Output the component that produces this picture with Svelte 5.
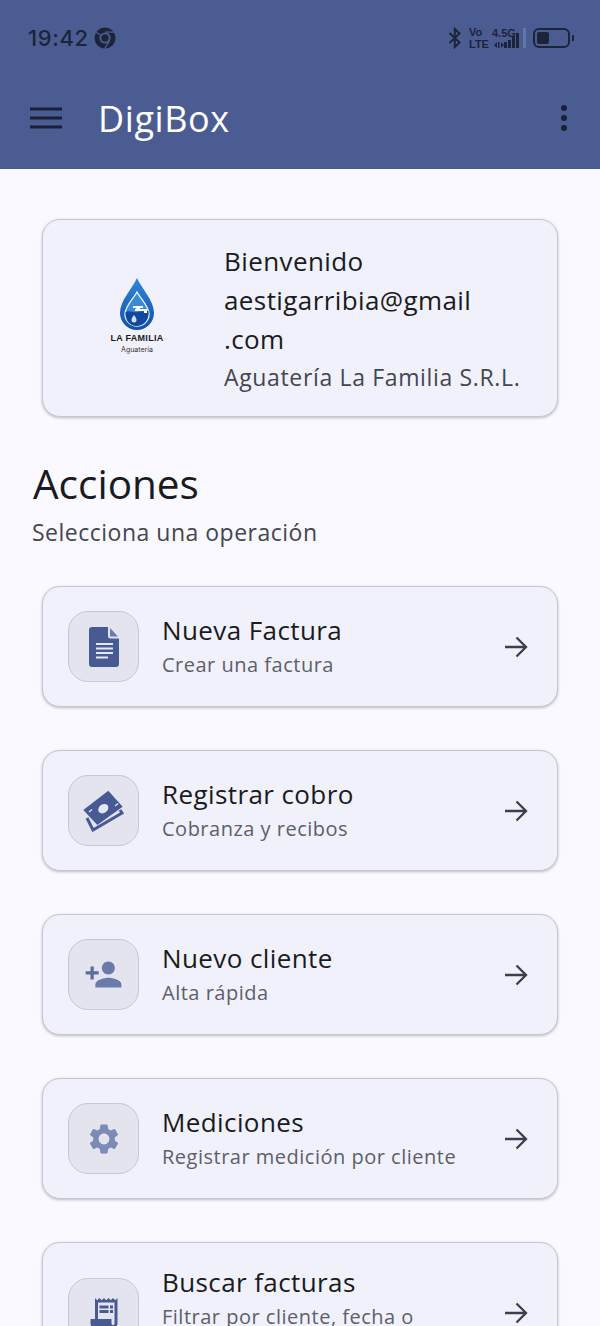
<script>
  const actions = [
    { title: 'Nueva Factura', sub: 'Crear una factura', icon: 'doc' },
    { title: 'Registrar cobro', sub: 'Cobranza y recibos', icon: 'money' },
    { title: 'Nuevo cliente', sub: 'Alta rápida', icon: 'person' },
    { title: 'Mediciones', sub: 'Registrar medición por cliente', icon: 'gear' },
    { title: 'Buscar facturas', sub: 'Filtrar por cliente, fecha o estado', icon: 'receipt' }
  ]
</script>

<div class="screen">
  <header class="top">
    <div class="status">
      <span class="time">19:42</span>
      <svg class="chrome" width="22" height="22" viewBox="0 0 22 22">
        <circle cx="11" cy="11" r="10.5" fill="#1c2439" />
        <circle cx="11" cy="11" r="5.6" fill="#4b5c92" />
        <circle cx="11" cy="11" r="3.7" fill="#1c2439" />
        <path d="M11 5.2h9M6 8l-4.600-3.400M15.600 13.500l-4.800 8" stroke="#4b5c92" stroke-width="1.300" fill="none" />
      </svg>
      <span class="spacer"></span>
      <svg class="bt" width="14" height="22" viewBox="0 0 14 22">
        <path d="M1.500 6l10 9.500L6.800 20V2l4.700 4.500L1.500 16" fill="none" stroke="#1c2439" stroke-width="2" />
      </svg>
      <span class="volte"><span>Vo</span><span>LTE</span></span>
      <span class="net">
        <span class="g">4.5G</span>
        <svg width="10" height="6" viewBox="0 0 10 6" fill="#1c2439">
          <path d="M0 3l3-3v6zM10 3L7 0v6z" />
          <rect x="4" y="0" width="1.500" height="6" />
        </svg>
      </span>
      <span class="bars">
        {#each [6, 8, 12, 15] as h}
          <i style="height: {h}px"></i>
        {/each}
        <i class="off" style="height: 20px"></i>
      </span>
      <span class="battery"><span class="level"></span></span>
      <span class="nub"></span>
    </div>
    <div class="bar">
      <svg width="32" height="22" viewBox="0 0 32 22">
        <path d="M0 2h32M0 11h32M0 20h32" stroke="#1a2135" stroke-width="3" />
      </svg>
      <span class="brand">DigiBox</span>
      <span class="spacer"></span>
      <svg class="dots" width="8" height="28" viewBox="0 0 8 28">
        <circle cx="4" cy="4" r="3" fill="#1a2135" />
        <circle cx="4" cy="14" r="3" fill="#1a2135" />
        <circle cx="4" cy="24" r="3" fill="#1a2135" />
      </svg>
    </div>
  </header>

  <main>
    <section class="card welcome">
      <div class="logo">
        <svg width="36" height="54" viewBox="0 0 36 54">
          <defs>
            <linearGradient id="drop" x1="0" y1="0" x2="0" y2="1">
              <stop offset="0" stop-color="#2f86d8" />
              <stop offset="1" stop-color="#1250ac" />
            </linearGradient>
          </defs>
          <path d="M18 1C14 11 1 23 1 36a17 17 0 0 0 34 0C35 23 22 11 18 1z" fill="url(#drop)" />
          <path d="M18 15C15 21 6 29 6 37a12 12 0 0 0 24 0C30 29 21 21 18 15z" fill="#3a8ad6" stroke="#e8f2fb" stroke-width="1.400" />
          <path d="M6.500 35c5-2 8 1 12 0s7-1 11-1c1 9-5 15-12 15S6 43 6.500 35z" fill="#14489f" />
          <path d="M14 29h10v2h-3v1h7v4h-3v-2h-9v-2h1v-1h-3z" fill="#fff" />
          <path d="M15 38c1.500 2 2.500 3.500 2.500 5a2.500 2.500 0 0 1-5 0c0-1.500 1-3 2.500-5z" fill="#cfe4f7" />
        </svg>
        <span class="lf">LA FAMILIA</span>
        <span class="ag">Aguatería</span>
      </div>
      <div class="who">
        <p class="line">Bienvenido</p>
        <p class="line email">aestigarribia@gmail<br />.com</p>
        <p class="org">Aguatería La Familia S.R.L.</p>
      </div>
    </section>

    <h1>Acciones</h1>
    <p class="lead">Selecciona una operación</p>

    <div class="list">
      {#each actions as a}
        <article class="card action">
          <div class="tile">
            {#if a.icon === 'doc'}
              <svg width="30" height="40" viewBox="0 0 30 40">
                <path d="M3 0h16v9a2.500 2.500 0 0 0 2.500 2.500H30V37a3 3 0 0 1-3 3H3a3 3 0 0 1-3-3V3a3 3 0 0 1 3-3z" fill="#475a94" />
                <path d="M21 1l8 8.500h-8z" fill="#6a7bab" />
                <path d="M7 17h17M7 21.500h17M7 26h17M7 30.500h12" stroke="#e4e6f0" stroke-width="1.800" />
              </svg>
            {:else if a.icon === 'money'}
              <svg width="42" height="42" viewBox="0 0 42 42">
                <path d="M4 28l6 12 29-17-2-3" fill="none" stroke="#475a94" stroke-width="3" />
                <path d="M.3 20L25.300.7l14.400 16L14.300 35z" fill="#475a94" />
                <ellipse cx="20.300" cy="18.700" rx="5.500" ry="4.300" transform="rotate(-38 20.300 18.700)" fill="#e4e6f0" />
                <path d="M6 20l3-2.500M32 14l3-2.500" stroke="#e4e6f0" stroke-width="1.300" transform="translate(0 2)" />
              </svg>
            {:else if a.icon === 'person'}
              <svg width="39" height="39" viewBox="0 0 24 24" fill="#6a7bab">
                <path d="M15 12c2.210 0 4-1.790 4-4s-1.790-4-4-4-4 1.790-4 4 1.790 4 4 4zm0 2c-2.670 0-8 1.340-8 4v2h16v-2c0-2.660-5.330-4-8-4z" />
                <path d="M6 10V7H4v3H1v2h3v3h2v-3h3v-2H6z" fill="#5b6c9f" />
              </svg>
            {:else if a.icon === 'gear'}
              <svg width="36" height="36" viewBox="0 0 24 24">
                <path fill="#7c8bb5" d="M19.140 12.940c.04-.3.060-.61.060-.94 0-.32-.02-.64-.07-.94l2.030-1.580a.49.490 0 0 0 .12-.61l-1.920-3.320a.488.488 0 0 0-.59-.22l-2.390.96c-.5-.38-1.030-.7-1.620-.94l-.36-2.540a.484.484 0 0 0-.48-.41h-3.840c-.24 0-.43.170-.47.410l-.36 2.540c-.59.240-1.130.570-1.620.940l-2.390-.96c-.22-.080-.47 0-.59.220L2.740 8.870c-.12.210-.08.470.12.610l2.030 1.580c-.05.300-.09.630-.09.940s.02.640.07.940l-2.030 1.580a.49.490 0 0 0-.12.610l1.920 3.320c.12.220.37.290.59.220l2.390-.96c.5.380 1.030.7 1.620.94l.36 2.540c.05.240.24.410.48.410h3.840c.24 0 .44-.17.47-.41l.36-2.540c.59-.24 1.130-.56 1.620-.94l2.390.96c.22.080.47 0 .59-.22l1.920-3.320c.12-.22.070-.47-.12-.61l-2.010-1.580zM12 15.600c-1.980 0-3.600-1.620-3.600-3.600s1.620-3.600 3.600-3.600 3.600 1.620 3.600 3.600-1.620 3.600-3.600 3.600z" />
              </svg>
            {:else}
              <svg width="36" height="36" viewBox="0 0 24 24" fill="#475a94">
                <path d="M19.500 3.500 18 2l-1.500 1.500L15 2l-1.500 1.500L12 2l-1.500 1.500L9 2 7.500 3.500 6 2v14H3v3c0 1.660 1.340 3 3 3h12c1.660 0 3-1.340 3-3V2l-1.500 1.500zM19 19c0 .55-.45 1-1 1s-1-.45-1-1v-3H8V5h11v14z" />
                <path d="M9 7h6v2H9zm7 0h2v2h-2zM9 10h6v2H9zm7 0h2v2h-2z" />
              </svg>
            {/if}
          </div>
          <div class="text">
            <h2>{a.title}</h2>
            <p>{a.sub}</p>
          </div>
          <svg class="go" width="24" height="22" viewBox="0 0 24 22" fill="none" stroke="#3d3f4c" stroke-width="2.300">
            <path d="M1 11h21M12.500 1.500L22 11l-9.500 9.500" />
          </svg>
        </article>
      {/each}
    </div>
  </main>
</div>

<style>
  :global(body) {
    margin: 0;
    background: #f9f9ff;
  }

  .screen {
    width: 600px;
    height: 1326px;
    overflow: hidden;
    font-family: "Open Sans", "Noto Sans", sans-serif;
    color: #1a1b21;
    background: #f9f9ff;
  }

  .top {
    background: #4b5c92;
    height: 169px;
    box-sizing: border-box;
    padding: 20px 26px 0 28px;
  }

  .status {
    display: flex;
    align-items: center;
    height: 36px;
    color: #1c2439;
  }

  .time {
    font-family: Inter, sans-serif;
    font-size: 22px;
    font-weight: 500;
    letter-spacing: 0.6px;
  }

  .chrome {
    margin-left: 5px;
  }

  .spacer {
    flex: 1;
  }

  .bt {
    margin-right: 7px;
  }

  .volte {
    display: flex;
    flex-direction: column;
    font-family: "Liberation Sans", sans-serif;
    font-size: 11px;
    font-weight: 700;
    line-height: 12px;
    width: 23px;
  }

  .net {
    display: flex;
    flex-direction: column;
    align-items: flex-start;
    font-family: "Liberation Sans", sans-serif;
    font-weight: 700;
    width: 20px;
    padding-bottom: 1px;
  }

  .net svg {
    margin: 3px 0 0 2px;
  }

  .g {
    font-size: 11px;
    line-height: 12px;
    white-space: nowrap;
  }

  .bars {
    display: flex;
    align-items: flex-end;
    gap: 1px;
    height: 20px;
    margin: 0 7px 0 -8px;
  }

  .bars i {
    display: block;
    width: 3px;
    background: #1c2439;
  }

  .bars i.off {
    margin-left: 3px;
    background: #6475a8;
  }

  .battery {
    display: block;
    box-sizing: border-box;
    width: 37px;
    height: 20px;
    border: 2px solid #1c2439;
    border-radius: 6px;
    padding: 2px;
  }

  .level {
    display: block;
    width: 12px;
    height: 12px;
    background: #1c2439;
    border-radius: 2px;
  }

  .nub {
    display: block;
    width: 2px;
    height: 6px;
    margin-left: 2px;
    background: #1c2439;
  }

  .bar {
    display: flex;
    align-items: center;
    height: 44px;
    margin-top: 40px;
    padding: 0 6px 0 2px;
  }

  .brand {
    margin-left: 36px;
    font-size: 36px;
    letter-spacing: 0.6px;
    color: #fff;
  }

  main {
    padding: 50px 42px 0 42px;
  }

  .card {
    box-sizing: border-box;
    display: flex;
    align-items: center;
    background: #f0f1fa;
    border: 1.500px solid #c6c7d0;
    border-radius: 18px;
    box-shadow: 0 1px 3px rgba(0, 0, 0, 0.25);
  }

  .welcome {
    height: 198px;
    padding-left: 51px;
  }

  .logo {
    display: flex;
    flex-direction: column;
    align-items: center;
    width: 86px;
    margin-right: 44px;
  }

  .logo svg {
    margin-top: -3px;
  }

  .lf {
    margin-top: 1px;
    font-family: "Liberation Sans", sans-serif;
    font-size: 9px;
    font-weight: 700;
    letter-spacing: 0.3px;
    line-height: 12px;
    color: #1b1b1b;
  }

  .ag {
    font-family: Inter, sans-serif;
    font-size: 7px;
    line-height: 12px;
    color: #333;
  }

  .who p {
    margin: 0;
  }

  .line {
    font-size: 26px;
    letter-spacing: 0.4px;
    line-height: 39px;
    white-space: nowrap;
  }

  .org {
    font-size: 23px;
    letter-spacing: 0.65px;
    line-height: 36px;
    color: #44464f;
    white-space: nowrap;
  }

  h1 {
    margin: 42px 0 0 -9px;
    font-size: 40.5px;
    line-height: 50px;
    font-weight: 400;
  }

  .lead {
    margin: 8px 0 0 -10px;
    font-size: 23px;
    letter-spacing: 0.5px;
    line-height: 30px;
    color: #44464f;
  }

  .list {
    display: flex;
    flex-direction: column;
    gap: 43px;
    margin-top: 39px;
  }

  .action {
    min-height: 121px;
    padding: 24px 29px 24px 25px;
    gap: 23px;
  }

  .tile {
    flex: none;
    display: flex;
    align-items: center;
    justify-content: center;
    width: 71px;
    height: 71px;
    box-sizing: border-box;
    background: #e3e4ee;
    border: 1.500px solid #c6c7d0;
    border-radius: 20px;
  }

  .text {
    flex: 1;
    padding-right: 8px;
  }

  .text h2 {
    margin: 0;
    font-size: 26px;
    letter-spacing: 0.4px;
    line-height: 31px;
    font-weight: 400;
  }

  .text p {
    margin: 5px 0 0 0;
    font-size: 20px;
    letter-spacing: 0.5px;
    line-height: 28px;
    color: #5d5f6b;
  }

  .go {
    flex: none;
  }
</style>
